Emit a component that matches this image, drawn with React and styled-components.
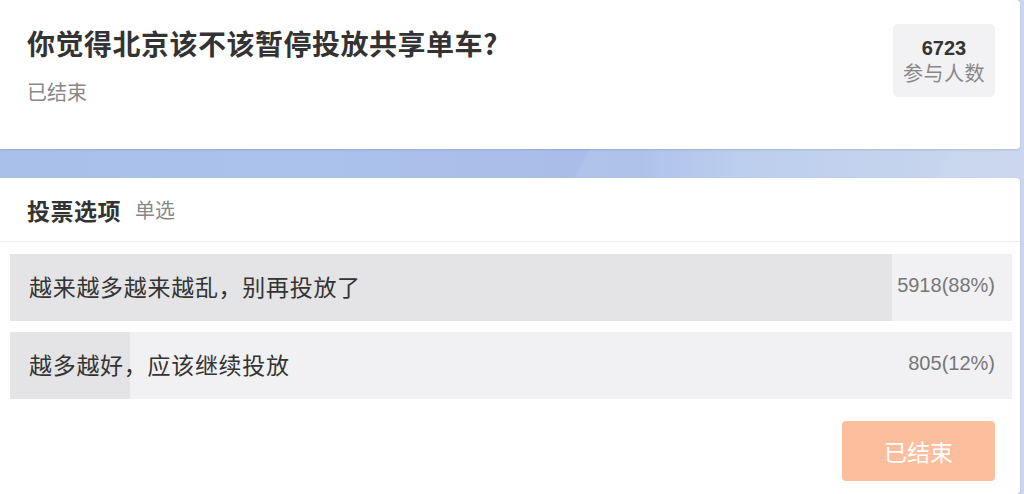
import React from "react";
import styled, { createGlobalStyle } from "styled-components";

const GlobalStyle = createGlobalStyle`
  html, body { margin: 0; padding: 0; }
  body {
    font-family: "Noto Sans CJK SC", "Noto Sans", sans-serif;
    background:
      linear-gradient(118deg, transparent 0 52%, rgba(255,255,255,0.08) 52% 80%, transparent 80%),
      linear-gradient(118deg, transparent 0 80%, rgba(255,255,255,0.1) 80%),
      linear-gradient(90deg, #a9c0ea 0%, #abc2ec 30%, #a8bde8 62%, #b6caed 72%, #bfcfec 86%, #c6d3ec 100%);
    background-attachment: fixed;
    min-height: 494px;
  }
`;

const Page = styled.div`
  display: flex;
  flex-direction: column;
  gap: 29px;
  padding-right: 4px;
  min-height: 494px;
  box-sizing: border-box;
`;

const Card = styled.section`
  background: #fff;
  border-radius: 0 4px 4px 0;
  box-shadow: 0 1px 2px rgba(60, 80, 120, 0.18);
  ${(p) => (p.$grow ? "flex: 1;" : "")}
`;

const Head = styled.div`
  display: flex;
  justify-content: space-between;
  align-items: flex-start;
  height: 149px;
  box-sizing: border-box;
  padding: 24px 25px 0 27px;
`;

const TitleCol = styled.div`
  display: flex;
  flex-direction: column;
`;

const Title = styled.h1`
  margin: 0;
  font-size: 28px;
  line-height: 38px;
  font-weight: 700;
  letter-spacing: 0.5px;
  color: #333;
`;

const Sub = styled.div`
  margin-top: 16px;
  font-size: 20px;
  line-height: 28px;
  color: #888;
`;

const Stat = styled.div`
  width: 102px;
  height: 73px;
  border-radius: 5px;
  background: #f2f2f4;
  display: flex;
  flex-direction: column;
  align-items: center;
  justify-content: center;
`;

const StatNum = styled.div`
  font-family: "Liberation Sans", Arial, sans-serif;
  font-weight: 700;
  font-size: 20px;
  line-height: 24px;
  color: #333;
`;

const StatLabel = styled.div`
  font-size: 20px;
  line-height: 26px;
  letter-spacing: 0.5px;
  color: #888;
`;

const SectionHead = styled.div`
  height: 64px;
  box-sizing: border-box;
  border-bottom: 1px solid #ededed;
  display: flex;
  align-items: center;
  gap: 14px;
  padding-left: 27px;
`;

const SectionTitle = styled.span`
  font-size: 23px;
  font-weight: 700;
  letter-spacing: 0.5px;
  color: #333;
`;

const SectionNote = styled.span`
  font-size: 20px;
  color: #888;
`;

const Options = styled.div`
  display: flex;
  flex-direction: column;
  gap: 11px;
  padding: 12px 8px 0 10px;
`;

const Option = styled.div`
  position: relative;
  height: 67px;
  background: #f1f1f3;
  display: flex;
  align-items: center;
  justify-content: space-between;
  padding: 0 17px 4px 19px;
  box-sizing: border-box;
  overflow: hidden;
`;

const Fill = styled.div`
  position: absolute;
  left: 0;
  top: 0;
  bottom: 0;
  background: #e4e4e6;
`;

const OptionText = styled.span`
  position: relative;
  font-size: 23px;
  letter-spacing: 0.7px;
  color: #333;
`;

const OptionCount = styled.span`
  position: relative;
  font-family: "Liberation Sans", Arial, sans-serif;
  font-size: 20px;
  color: #777;
`;

const Footer = styled.div`
  display: flex;
  justify-content: flex-end;
  padding: 22px 25px 0 0;
`;

const Button = styled.button`
  width: 153px;
  height: 60px;
  border: none;
  border-radius: 4px;
  background: #fdbe9e;
  color: #fff;
  font-family: "Noto Sans CJK SC", sans-serif;
  font-size: 23px;
`;

const options = [
  { text: "越来越多越来越乱，别再投放了", count: 5918, pct: 88 },
  { text: "越多越好，应该继续投放", count: 805, pct: 12 },
];

export default function App() {
  return (
    <>
      <GlobalStyle />
      <Page>
        <Card>
          <Head>
            <TitleCol>
              <Title>你觉得北京该不该暂停投放共享单车?</Title>
              <Sub>已结束</Sub>
            </TitleCol>
            <Stat>
              <StatNum>6723</StatNum>
              <StatLabel>参与人数</StatLabel>
            </Stat>
          </Head>
        </Card>
        <Card $grow>
          <SectionHead>
            <SectionTitle>投票选项</SectionTitle>
            <SectionNote>单选</SectionNote>
          </SectionHead>
          <Options>
            {options.map((o) => (
              <Option key={o.text}>
                <Fill style={{ width: `${o.pct}%` }} />
                <OptionText>{o.text}</OptionText>
                <OptionCount>
                  {o.count}({o.pct}%)
                </OptionCount>
              </Option>
            ))}
          </Options>
          <Footer>
            <Button>已结束</Button>
          </Footer>
        </Card>
      </Page>
    </>
  );
}
